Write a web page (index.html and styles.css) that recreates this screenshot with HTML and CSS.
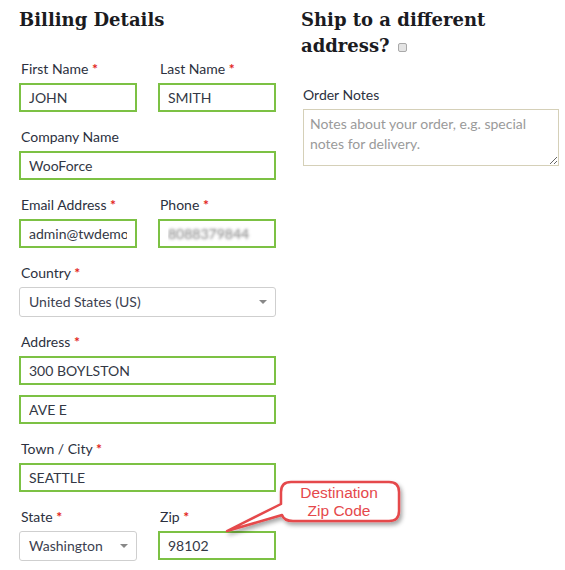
FILE: index.html
```html
<!DOCTYPE html>
<html lang="en">
<head>
  <meta charset="UTF-8">
  <title>Checkout</title>
  <link rel="stylesheet" href="styles.css">
</head>
<body>
  <div class="checkout">
    <div class="col billing">
      <h3>Billing Details</h3>

      <div class="row">
        <div class="field">
          <label>First Name <abbr>*</abbr></label>
          <input class="ok" type="text" value="JOHN">
        </div>
        <div class="field">
          <label>Last Name <abbr>*</abbr></label>
          <input class="ok" type="text" value="SMITH">
        </div>
      </div>

      <div class="field">
        <label>Company Name</label>
        <input class="ok" type="text" value="WooForce">
      </div>

      <div class="row">
        <div class="field">
          <label>Email Address <abbr>*</abbr></label>
          <input class="ok" type="text" value="admin@twdemo0.com">
        </div>
        <div class="field">
          <label>Phone <abbr>*</abbr></label>
          <input class="ok blurred" type="text" value="8088379844">
        </div>
      </div>

      <div class="field">
        <label>Country <abbr>*</abbr></label>
        <div class="select">United States (US)<span class="caret"></span></div>
      </div>

      <div class="field">
        <label>Address <abbr>*</abbr></label>
        <input class="ok" type="text" value="300 BOYLSTON">
        <input class="ok second" type="text" value="AVE E">
      </div>

      <div class="field">
        <label>Town / City <abbr>*</abbr></label>
        <input class="ok" type="text" value="SEATTLE">
      </div>

      <div class="row">
        <div class="field">
          <label>State <abbr>*</abbr></label>
          <div class="select">Washington<span class="caret"></span></div>
        </div>
        <div class="field">
          <label>Zip <abbr>*</abbr></label>
          <input class="ok" type="text" value="98102">
        </div>
      </div>
    </div>

    <div class="col shipping">
      <h3>Ship to a different address? <input class="check" type="checkbox"></h3>

      <div class="field">
        <label>Order Notes</label>
        <textarea placeholder="Notes about your order, e.g. special notes for delivery."></textarea>
      </div>
    </div>
  </div>

  <!-- annotation callout -->
  <svg class="callout" width="565" height="570" viewBox="0 0 565 570">
    <defs>
      <filter id="shadow" x="-20%" y="-20%" width="140%" height="160%">
        <feDropShadow dx="2" dy="3" stdDeviation="2" flood-color="#000" flood-opacity="0.35"/>
      </filter>
    </defs>
    <path d="M291,482 H389 Q399,482 399,492 V511 Q399,521 389,521 H293 Q284,521 282,515 L227,531 L281,504 V492 Q281,482 291,482 Z"
          fill="#fff" stroke="#e5484b" stroke-width="2.5" stroke-linejoin="round" filter="url(#shadow)"/>
    <text x="339" y="498" text-anchor="middle">Destination</text>
    <text x="339" y="516" text-anchor="middle">Zip Code</text>
  </svg>
</body>
</html>
```

FILE: styles.css
```css
body {
  margin: 0;
  font-family: Lato, "Open Sans", sans-serif;
  font-size: 14px;
  color: #333845;
  background: #fff;
}

.checkout {
  display: flex;
  gap: 25px;
  padding: 0 0 0 19px;
}

.col {
  display: flex;
  flex-direction: column;
}

.billing {
  width: 257px;
}

.shipping {
  width: 258px;
}

h3 {
  font-family: "DejaVu Serif", serif;
  font-weight: bold;
  font-size: 18px;
  line-height: 26px;
  color: #1b1b1f;
  margin: 7px 0 27px;
}

.shipping h3 {
  margin-bottom: 27px;
}

.row {
  display: flex;
  gap: 21px;
}

.row .field {
  flex: 1;
  min-width: 0;
}

.field {
  display: flex;
  flex-direction: column;
  margin-bottom: 16px;
}

label {
  line-height: 18px;
  margin: 0 0 5px 2px;
  color: #2c3140;
}

abbr {
  color: #e2231a;
  font-weight: bold;
  text-decoration: none;
}

input[type="text"] {
  box-sizing: border-box;
  height: 29px;
  width: 100%;
  padding: 0 8px;
  font-family: inherit;
  font-size: 14px;
  color: #333845;
  border: 2px solid #7cc144;
  border-radius: 0;
  outline: none;
  background: #fff;
}

input.second {
  margin-top: 10px;
}

input.blurred {
  color: transparent;
  text-shadow: 0 0 3px rgba(90, 90, 90, 0.8);
}

.select {
  position: relative;
  box-sizing: border-box;
  height: 30px;
  line-height: 28px;
  padding: 0 9px;
  border: 1px solid #cfcfcf;
  border-radius: 3px;
  color: #3c4150;
}

.caret {
  position: absolute;
  right: 8px;
  top: 12px;
  border-left: 4px solid transparent;
  border-right: 4px solid transparent;
  border-top: 4px solid #888;
}

.check {
  appearance: none;
  box-sizing: border-box;
  width: 9px;
  height: 9px;
  margin: 0 0 0 2px;
  vertical-align: 0;
  background: #e4e4e4;
  border: 1px solid #a9a9a9;
  border-radius: 2px;
}

textarea {
  box-sizing: border-box;
  width: 256px;
  height: 57px;
  margin-left: 2px;
  padding: 4px 6px;
  font-family: inherit;
  font-size: 14px;
  line-height: 20px;
  border: 1px solid #d5d0b8;
  resize: both;
}

textarea::placeholder {
  color: #9a9a9a;
}

.callout {
  position: absolute;
  left: 0;
  top: 0;
  pointer-events: none;
}

.callout text {
  font-family: "Liberation Sans", Arial, sans-serif;
  font-size: 15.5px;
  fill: #e5484b;
}
```
